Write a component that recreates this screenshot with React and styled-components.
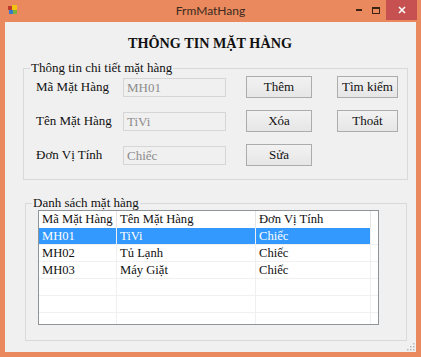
import React from 'react'
import styled, { createGlobalStyle } from 'styled-components'

const Global = createGlobalStyle`
  html, body { margin: 0; padding: 0; background: #e9895d; }
  * { box-sizing: border-box; }
`

const Window = styled.div`
  width: 421px;
  height: 357px;
  background: #e9895d;
  display: flex;
  flex-direction: column;
  padding: 0 5px 6px 5px;
`

const TitleBar = styled.div`
  height: 22px;
  display: grid;
  grid-template-columns: 1fr auto 1fr;
  align-items: start;
`

const AppIcon = styled.svg`
  margin: 5px 0 0 3px;
`

const Caption = styled.div`
  font-family: Lato, "Liberation Sans", sans-serif;
  font-size: 12px;
  line-height: 22px;
  color: #3b2a20;
`

const Controls = styled.div`
  display: flex;
  justify-content: flex-end;
  align-items: flex-start;
  margin-right: -1px;
`

const CtrlBtn = styled.div`
  width: ${p => p.$w}px;
  height: 20px;
  display: flex;
  align-items: center;
  justify-content: center;
  background: ${p => p.$bg || 'transparent'};
`

const ClientWrap = styled.div`
  flex: 1;
  display: flex;
  position: relative;
`

const Client = styled.div`
  flex: 1;
  background: #f0f0f0;
  padding: 11px 8px 11px 18px;
  display: flex;
  flex-direction: column;
  font-family: "Liberation Serif", "Times New Roman", serif;
  font-size: 13px;
  color: #111;
`

const Heading = styled.h1`
  margin: 0 11px 8px 0;
  font-size: 14.2px;
  line-height: 20px;
  font-weight: bold;
  text-align: center;
  color: #111;
`

const Group = styled.fieldset`
  margin: ${p => p.$m || '0'};
  padding: ${p => p.$p};
  border: 1px solid #d9d9d9;
  border-radius: 0;
  min-width: 0;
`

const Legend = styled.legend`
  padding: 0 1px;
  margin-left: ${p => p.$ml}px;
  line-height: 14px;
  font-size: 13px;
`

const DetailGrid = styled.div`
  display: grid;
  grid-template-columns: 87px 103px 86px 86px;
  row-gap: 12px;
  align-items: center;
`

const Label = styled.div``

const TextBox = styled.div`
  width: 103px;
  height: 19px;
  border: 1px solid #d6d6d6;
  background: #f0f0f0;
  color: #8c8c8c;
  padding-left: 3px;
  line-height: 17px;
`

const Button = styled.button`
  width: ${p => p.$w}px;
  height: 22px;
  margin-left: ${p => p.$ml}px;
  border: 1px solid #acacac;
  background: linear-gradient(#f2f2f2, #e6e6e6);
  font-family: inherit;
  font-size: 13px;
  color: #111;
  padding: 0;
`

const ListView = styled.div`
  height: 115px;
  border: 1px solid #8f9499;
  background: #fff;
  overflow: hidden;
  font-size: 12.6px;
`

const Row = styled.div`
  display: grid;
  grid-template-columns: 78px 139px 115px 1fr;
  height: 17px;
  line-height: 16px;
  color: ${p => (p.$sel ? '#fff' : '#111')};
`

const Cell = styled.div`
  padding-left: 3px;
  white-space: nowrap;
  overflow: hidden;
  border-right: 1px solid ${p => (p.$head ? '#e5e5e5' : '#f0f0f0')};
  border-bottom: 1px solid ${p => (p.$head ? 'transparent' : '#f0f0f0')};
  background: ${p => (p.$sel ? '#3399ff' : 'transparent')};
  &:last-child { border-right: none; background: transparent; }
`

const Grip = styled.svg`
  position: absolute;
  right: 1px;
  bottom: 1px;
`

const items = [
  ['MH01', 'TiVi', 'Chiếc'],
  ['MH02', 'Tủ Lạnh', 'Chiếc'],
  ['MH03', 'Máy Giặt', 'Chiếc'],
  ['', '', ''],
  ['', '', ''],
  ['', '', ''],
  ['', '', ''],
]

export default function App() {
  return (
    <Window>
      <Global />
      <TitleBar>
        <AppIcon width="10" height="10" viewBox="0 0 10 10">
          <rect x="0" y="1" width="4" height="4" fill="#c0392b" />
          <rect x="4" y="0" width="5" height="5" fill="#f1c40f" />
          <rect x="1" y="5" width="4" height="4" fill="#3a78c9" />
          <rect x="5" y="5" width="4" height="4" fill="#7fb13d" />
        </AppIcon>
        <Caption>FrmMatHang</Caption>
        <Controls>
          <CtrlBtn $w={18}>
            <svg width="6" height="2"><rect width="6" height="2" fill="#3b2416" /></svg>
          </CtrlBtn>
          <CtrlBtn $w={16}>
            <svg width="8" height="7"><rect x="0.5" y="0.5" width="7" height="6" fill="none" stroke="#3b2416" /><rect x="0" y="0" width="8" height="2" fill="#3b2416" /></svg>
          </CtrlBtn>
          <CtrlBtn $w={31} $bg="#c75050" style={{ marginLeft: 2 }}>
            <svg width="8" height="8" viewBox="0 0 8 8"><path d="M1 1 L7 7 M7 1 L1 7" stroke="#fff" strokeWidth="1.6" /></svg>
          </CtrlBtn>
        </Controls>
      </TitleBar>
      <ClientWrap>
        <Client>
          <Heading>THÔNG TIN MẶT HÀNG</Heading>
          <Group $p="1px 0 13px 12px">
            <Legend $ml={-6}>Thông tin chi tiết mặt hàng</Legend>
            <DetailGrid>
              <Label>Mã Mặt Hàng</Label>
              <TextBox>MH01</TextBox>
              <Button $w={66} $ml={20}>Thêm</Button>
              <Button $w={61} $ml={25}>Tìm kiếm</Button>
              <Label>Tên Mặt Hàng</Label>
              <TextBox>TiVi</TextBox>
              <Button $w={66} $ml={20}>Xóa</Button>
              <Button $w={61} $ml={25}>Thoát</Button>
              <Label>Đơn Vị Tính</Label>
              <TextBox>Chiếc</TextBox>
              <Button $w={66} $ml={20}>Sửa</Button>
            </DetailGrid>
          </Group>
          <Group $m="16px 1px 0 2px" $p="0 27px 15px 12px">
            <Legend $ml={-6}>Danh sách mặt hàng</Legend>
            <ListView>
              <Row>
                <Cell $head>Mã Mặt Hàng</Cell>
                <Cell $head>Tên Mặt Hàng</Cell>
                <Cell $head>Đơn Vị Tính</Cell>
                <Cell $head />
              </Row>
              {items.map((r, i) => (
                <Row key={i} $sel={i === 0}>
                  <Cell $sel={i === 0}>{r[0]}</Cell>
                  <Cell $sel={i === 0}>{r[1]}</Cell>
                  <Cell $sel={i === 0}>{r[2]}</Cell>
                  <Cell />
                </Row>
              ))}
            </ListView>
          </Group>
        </Client>
        <Grip width="8" height="8" viewBox="0 0 8 8">
          <g fill="#b8b8b8">
            <rect x="6" y="0" width="1.5" height="1.5" />
            <rect x="3" y="3" width="1.5" height="1.5" />
            <rect x="6" y="3" width="1.5" height="1.5" />
            <rect x="0" y="6" width="1.5" height="1.5" />
            <rect x="3" y="6" width="1.5" height="1.5" />
            <rect x="6" y="6" width="1.5" height="1.5" />
          </g>
        </Grip>
      </ClientWrap>
    </Window>
  )
}
